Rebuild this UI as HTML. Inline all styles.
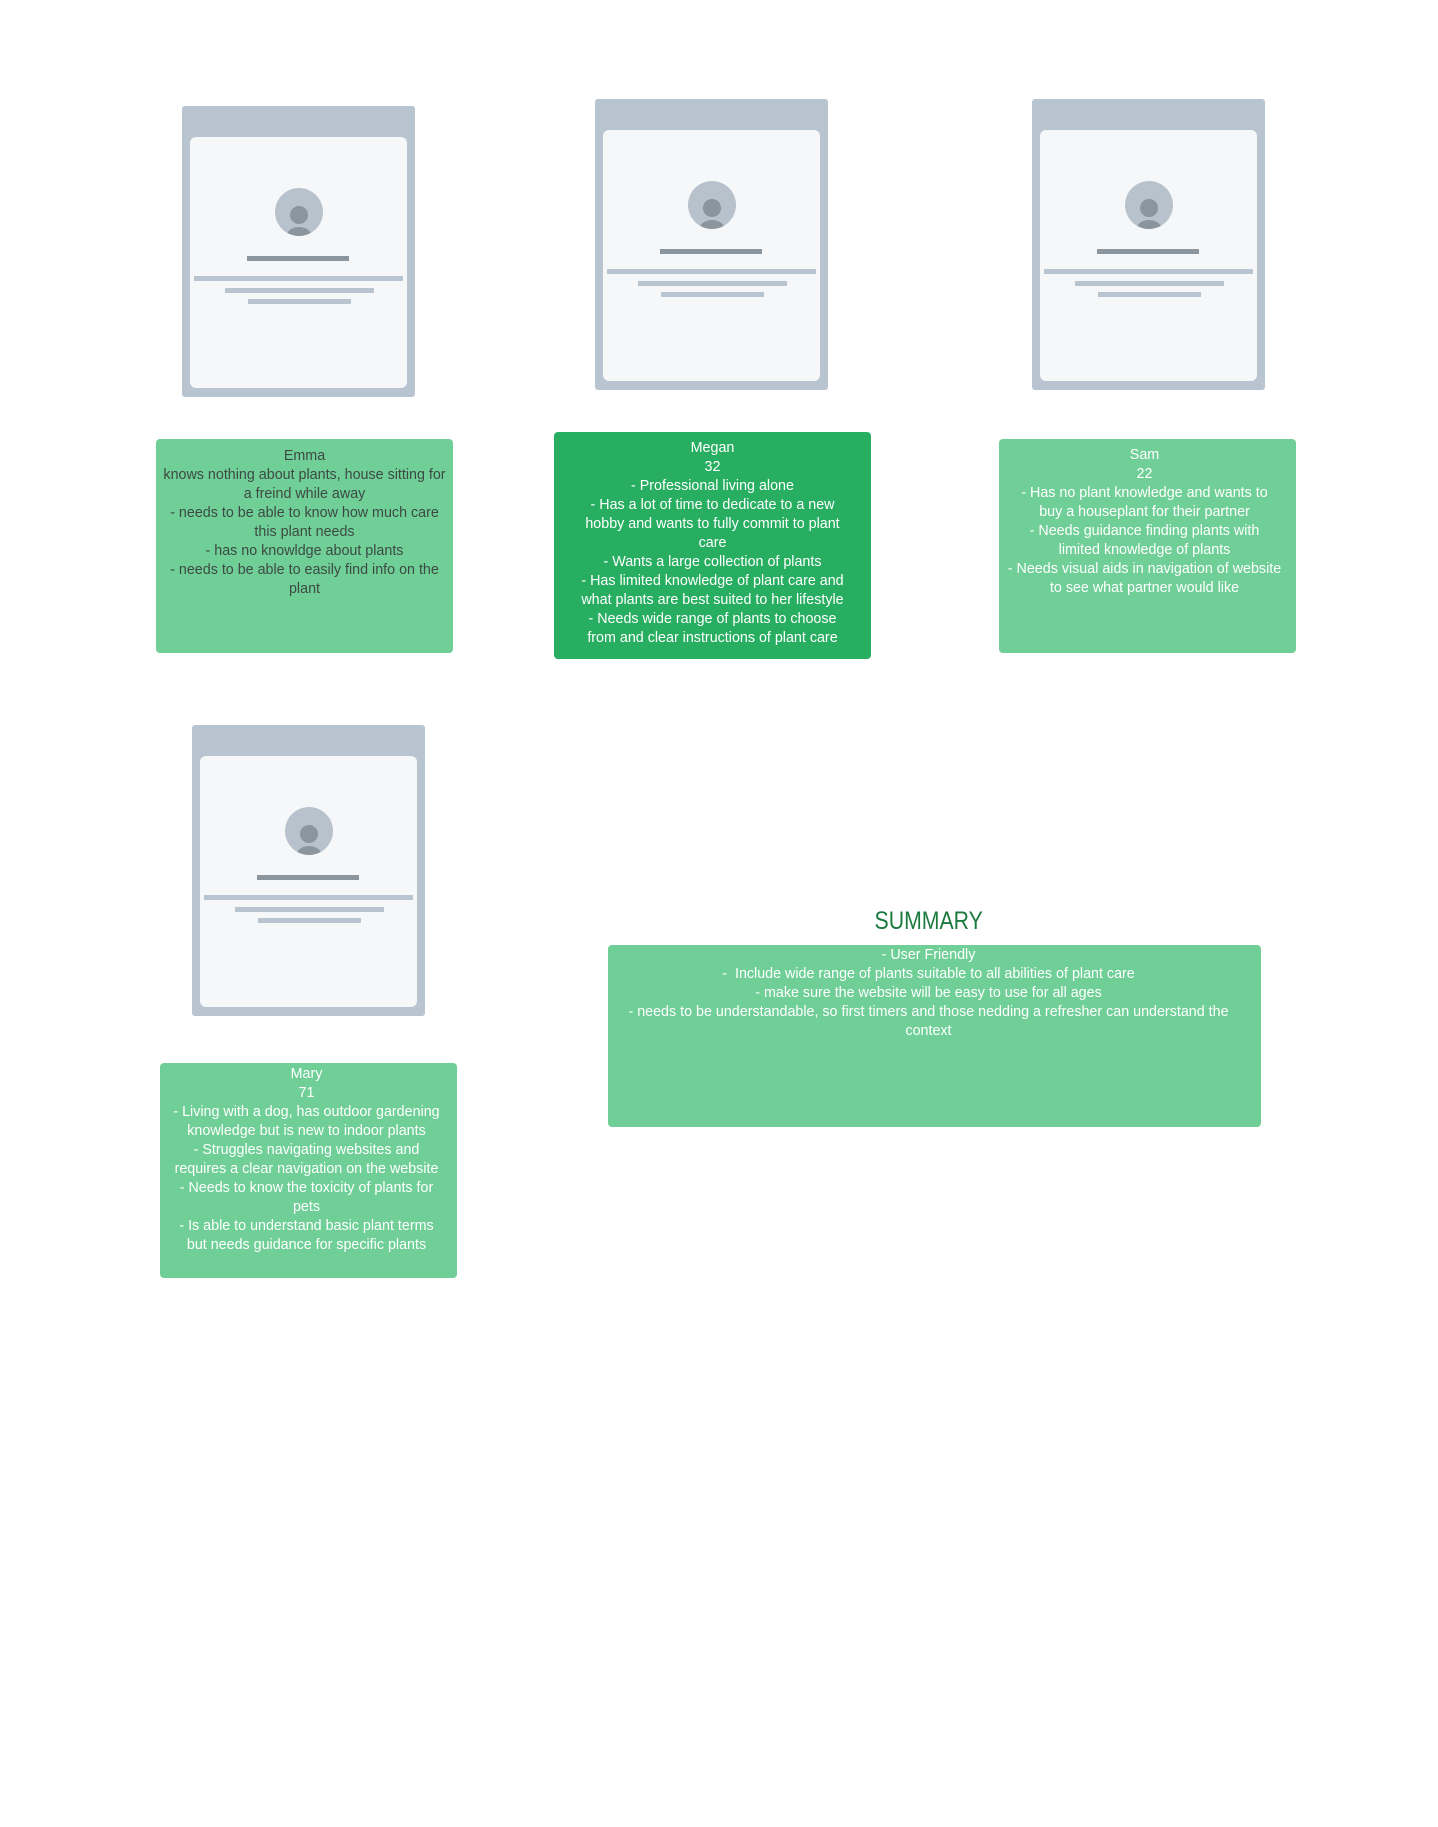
<!DOCTYPE html>
<html><head><meta charset="utf-8"><style>
html,body{margin:0;padding:0;background:#fff;}
body{width:1438px;height:1827px;position:relative;overflow:hidden;font-family:"Liberation Sans",sans-serif;}
.frame{position:absolute;width:233px;height:291px;background:#b8c4cf;border-radius:3px;}
.frame .in{position:absolute;left:8px;right:8px;top:31px;bottom:9px;background:#f6f7f9;border-radius:6px;}
.av{position:absolute;left:93px;top:82px;width:48px;height:48px;border-radius:50%;background:#b8c2cc;overflow:hidden;}
.av .h{position:absolute;left:15px;top:18px;width:18px;height:18px;border-radius:50%;background:#8a959e;}
.av .b{position:absolute;left:12px;top:39px;width:24px;height:16px;border-radius:50%;background:#8a959e;}
.bar{position:absolute;height:5px;}
.card{position:absolute;background:#6fcf97;border-radius:4px;color:#fff;text-align:center;font-size:14.3px;line-height:19px;white-space:nowrap;box-sizing:border-box;}
</style></head><body>

<div class="frame" style="left:182px;top:106px;"><div class="in"></div><div class="av"><div class="h"></div><div class="b"></div></div>
<div class="bar" style="left:65px;width:102px;top:150px;background:#8a959e"></div>
<div class="bar" style="left:12px;width:209px;top:170px;background:#b8c4cf"></div>
<div class="bar" style="left:43px;width:149px;top:182px;background:#b8c4cf"></div>
<div class="bar" style="left:66px;width:103px;top:193px;background:#b8c4cf"></div></div>

<div class="frame" style="left:595px;top:99px;"><div class="in"></div><div class="av"><div class="h"></div><div class="b"></div></div>
<div class="bar" style="left:65px;width:102px;top:150px;background:#8a959e"></div>
<div class="bar" style="left:12px;width:209px;top:170px;background:#b8c4cf"></div>
<div class="bar" style="left:43px;width:149px;top:182px;background:#b8c4cf"></div>
<div class="bar" style="left:66px;width:103px;top:193px;background:#b8c4cf"></div></div>

<div class="frame" style="left:1032px;top:99px;"><div class="in"></div><div class="av"><div class="h"></div><div class="b"></div></div>
<div class="bar" style="left:65px;width:102px;top:150px;background:#8a959e"></div>
<div class="bar" style="left:12px;width:209px;top:170px;background:#b8c4cf"></div>
<div class="bar" style="left:43px;width:149px;top:182px;background:#b8c4cf"></div>
<div class="bar" style="left:66px;width:103px;top:193px;background:#b8c4cf"></div></div>

<div class="frame" style="left:192px;top:725px;"><div class="in"></div><div class="av"><div class="h"></div><div class="b"></div></div>
<div class="bar" style="left:65px;width:102px;top:150px;background:#8a959e"></div>
<div class="bar" style="left:12px;width:209px;top:170px;background:#b8c4cf"></div>
<div class="bar" style="left:43px;width:149px;top:182px;background:#b8c4cf"></div>
<div class="bar" style="left:66px;width:103px;top:193px;background:#b8c4cf"></div></div>

<div class="card" style="left:156px;top:439px;width:297px;height:214px;padding-top:8px;color:#3d4a44;">Emma<br>knows nothing about plants, house sitting for<br>a freind while away<br>- needs to be able to know how much care<br>this plant needs<br>- has no knowldge about plants<br>- needs to be able to easily find info on the<br>plant</div>

<div class="card" style="left:554px;top:432px;width:317px;height:227px;padding-top:7px;background:#27ae60;">Megan<br>32<br>- Professional living alone<br>- Has a lot of time to dedicate to a new<br>hobby and wants to fully commit to plant<br>care<br>- Wants a large collection of plants<br>- Has limited knowledge of plant care and<br>what plants are best suited to her lifestyle<br>- Needs wide range of plants to choose<br>from and clear instructions of plant care</div>

<div class="card" style="left:999px;top:439px;width:297px;height:214px;padding-top:7px;padding-right:6px;">Sam<br>22<br>- Has no plant knowledge and wants to<br>buy a houseplant for their partner<br>- Needs guidance finding plants with<br>limited knowledge of plants<br>- Needs visual aids in navigation of website<br>to see what partner would like</div>

<div class="card" style="left:160px;top:1063px;width:297px;height:215px;padding-top:2px;padding-right:4px;">Mary<br>71<br>- Living with a dog, has outdoor gardening<br>knowledge but is new to indoor plants<br>- Struggles navigating websites and<br>requires a clear navigation on the website<br>- Needs to know the toxicity of plants for<br>pets<br>- Is able to understand basic plant terms<br>but needs guidance for specific plants</div>

<div style="position:absolute;left:608px;width:642px;top:907px;text-align:center;font-size:25px;color:#1c7a3f;"><span style="display:inline-block;transform:scaleX(0.85);">SUMMARY</span></div>
<div class="card" style="left:608px;top:945px;width:653px;height:182px;padding-top:1px;padding-right:12px;">- User Friendly<br>-&nbsp; Include wide range of plants suitable to all abilities of plant care<br>- make sure the website will be easy to use for all ages<br>- needs to be understandable, so first timers and those nedding a refresher can understand the<br>context</div>

</body></html>
